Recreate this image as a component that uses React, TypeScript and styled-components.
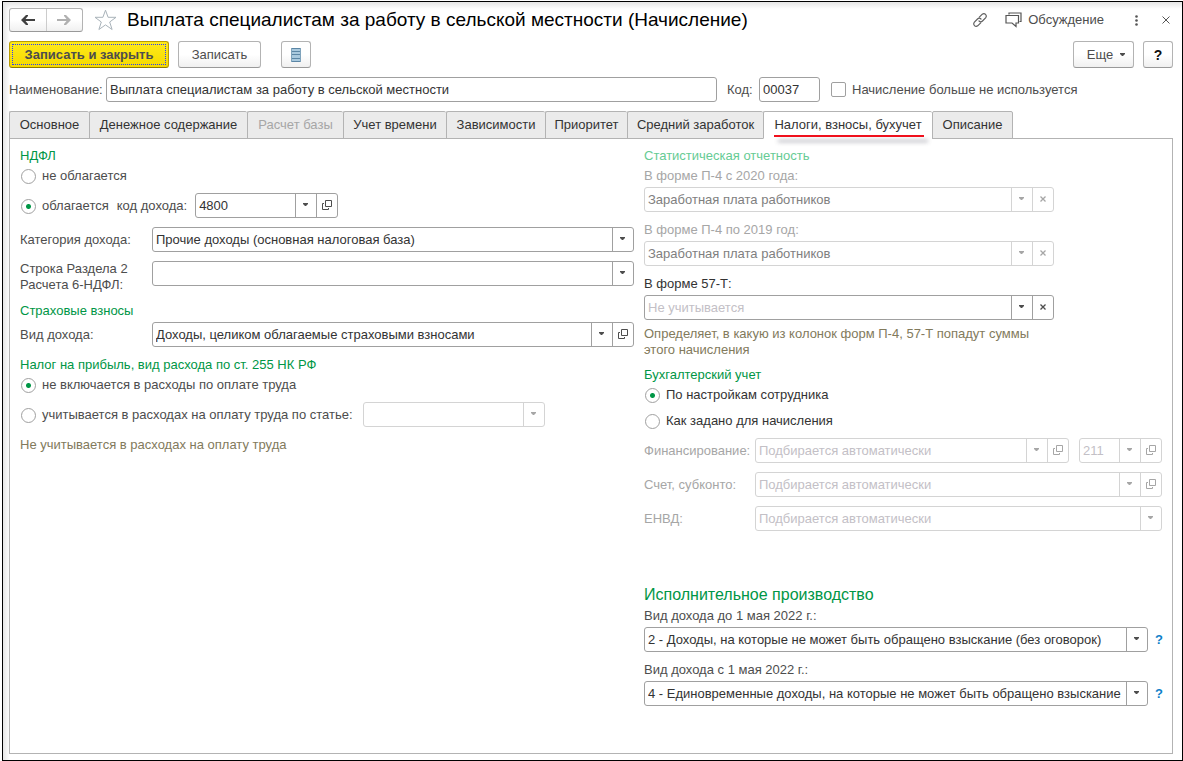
import React from "react";
import styled, { createGlobalStyle, css } from "styled-components";

const color = {
  text: "#4d4d4d",
  value: "#333333",
  green: "#009646",
  greenMuted: "#66cb94",
  note: "#827a5c",
  muted: "#a6a6a6",
  placeholder: "#c3c0c6",
  line: "#a0a0a0",
  lineMuted: "#d4d4d4",
  link: "#0f7fc9",
};

const GlobalStyle = createGlobalStyle`
  *, *::before, *::after { box-sizing: border-box; }
  body {
    margin: 0;
    background: #ffffff;
    color: ${color.text};
    font: 13px/16px "Liberation Sans", Arial, sans-serif;
  }
  button, input, select { font: inherit; color: inherit; margin: 0; }
`;

const Frame = styled.main`
  display: flex;
  flex-direction: column;
  min-height: calc(100vh - 1px);
  margin: 1px 0 0 2px;
  padding: 6px 9px 6px 6px;
  border: 1px solid #000000;
  background:
    linear-gradient(to right, #e6e6e6, rgba(255, 255, 255, 0)) left / 7px 100% no-repeat,
    linear-gradient(to bottom, #e6e6e6, rgba(255, 255, 255, 0)) top / 100% 7px no-repeat,
    #ffffff;
`;

const Header = styled.header`
  display: flex;
  align-items: center;
  height: 24px;
`;

const raised = css`
  border: 1px solid #b3b3b3;
  border-bottom-color: #999999;
  border-radius: 3px;
  background: linear-gradient(#ffffff 50%, #f0f0f0);
`;

const NavGroup = styled.div`
  ${raised}
  display: flex;
  width: 74px;
  height: 24px;
`;

const NavButton = styled.button`
  display: flex;
  flex: 1;
  align-items: center;
  justify-content: center;
  padding: 0;
  border: 0;
  background: none;
  & + & { border-left: 1px solid #cccccc; }
`;

const IconButton = styled.button`
  display: flex;
  align-items: center;
  justify-content: center;
  padding: 0;
  border: 0;
  background: none;
`;

const StarButton = styled(IconButton)`
  margin: 0 10px 0 11px;
`;

const Title = styled.h1`
  flex: 1;
  margin: 0;
  color: #000000;
  font-size: 19px;
  font-weight: 400;
  line-height: 24px;
  white-space: nowrap;
`;

const HeaderTools = styled.div`
  display: flex;
  align-items: center;
  padding-right: 3px;
`;

const Discussion = styled(IconButton)`
  gap: 6px;
  margin: 0 31px 0 17px;
`;

const CloseButton = styled(IconButton)`
  margin-left: 24px;
`;

const Toolbar = styled.div`
  display: flex;
  align-items: center;
  gap: 9px;
  margin-top: 9px;
`;

const Button = styled.button<{ $width: number }>`
  ${raised}
  display: flex;
  align-items: center;
  justify-content: center;
  width: ${(p) => p.$width}px;
  height: 27px;
  padding: 0;
`;

const PrimaryButton = styled(Button)`
  border-color: #b89b00;
  border-bottom-color: #8f7900;
  background: linear-gradient(#ffea1a, #f5d900);
  font-weight: 700;
  outline: 1px dotted #2a3cff;
  outline-offset: -4px;
`;

const ListButton = styled(Button)`
  margin: 0 auto 0 11px;
`;

const MoreButton = styled(Button)`
  gap: 7px;
  padding-left: 5px;
`;

const HelpButton = styled(Button)`
  color: #111111;
  font-size: 14px;
  font-weight: 700;
`;

const NameRow = styled.div`
  display: flex;
  align-items: center;
  margin-top: 9px;
`;

const TextInput = styled.input`
  height: 25px;
  padding: 0 3px;
  border: 1px solid ${color.line};
  border-radius: 3px;
  background: #ffffff;
  color: ${color.value};
`;

const NameLabel = styled.label`
  width: 97px;
`;

const NameInput = styled(TextInput)`
  flex: 0 1 611px;
  min-width: 0;
`;

const CodeLabel = styled.label`
  width: 32px;
  margin-left: 10px;
`;

const CodeInput = styled(TextInput)`
  width: 61px;
`;

const CheckLabel = styled.label`
  display: flex;
  align-items: center;
  gap: 6px;
  margin-left: 11px;
  white-space: nowrap;
`;

const Checkbox = styled.input`
  appearance: none;
  width: 15px;
  height: 15px;
  border: 1px solid ${color.line};
  border-radius: 2px;
  background: #ffffff;
`;

const Tabs = styled.div`
  display: flex;
  margin-top: 9px;
`;

const Tab = styled.button<{ $active?: boolean; $width: number }>`
  position: relative;
  flex: 0 0 auto;
  width: ${(p) => p.$width}px;
  height: 28px;
  margin-bottom: -1px;
  padding: 0;
  border: 1px solid #b3b3b3;
  border-right-width: 0;
  border-bottom-color: ${(p) => (p.$active ? "#ffffff" : "#b3b3b3")};
  border-radius: 2px 2px 0 0;
  background: ${(p) => (p.$active ? "#ffffff" : "#ebebeb")};
  color: ${color.value};
  white-space: nowrap;
  &:last-child { border-right-width: 1px; }
  &:disabled { color: ${color.muted}; }
`;

const ActiveMark = styled.span`
  position: absolute;
  right: 8px;
  bottom: 1px;
  left: 10px;
  height: 2px;
  background: #f0101c;
  box-shadow: 4px 5px 4px rgba(60, 60, 80, 0.45);
`;

const Panel = styled.section`
  display: grid;
  flex: 1;
  grid-template-columns: minmax(0, 614fr) minmax(0, 518fr);
  align-items: start;
  column-gap: 10px;
  padding: 8px 10px 46px;
  border: 1px solid #b3b3b3;
  background: #ffffff;
`;

const Column = styled.div`
  display: flex;
  flex-direction: column;
`;

const Group = styled.section<{ $top?: number }>`
  display: flex;
  flex-direction: column;
  gap: 9px;
  margin-top: ${(p) => p.$top ?? 0}px;
`;

const Heading = styled.h2<{ $muted?: boolean }>`
  margin: 0 0 -7px;
  color: ${(p) => (p.$muted ? color.greenMuted : color.green)};
  font-size: 13px;
  font-weight: 400;
  line-height: 18px;
`;

const LargeHeading = styled(Heading)`
  margin-bottom: -8px;
  font-size: 16px;
  line-height: 22px;
`;

const RadioLabel = styled.label<{ $strong?: boolean }>`
  display: flex;
  align-items: center;
  gap: 6px;
  height: 18px;
  padding-left: 1px;
  margin-bottom: -1px;
  line-height: 18px;
  white-space: nowrap;
  color: ${(p) => (p.$strong ? color.value : color.text)};
`;

const Radio = styled.input`
  appearance: none;
  width: 15px;
  height: 15px;
  border: 1px solid ${color.line};
  border-radius: 50%;
  background: #ffffff;
  &:checked {
    background: radial-gradient(circle, ${color.green} 0 2px, #ffffff 3px);
  }
`;

const InlineRow = styled.div<{ $gap: number }>`
  display: flex;
  align-items: center;
  gap: ${(p) => p.$gap}px;
`;

const InlineLabel = styled.label`
  white-space: nowrap;
`;

const FieldRow = styled.div<{ $label: number }>`
  display: grid;
  grid-template-rows: 25px;
  grid-template-columns: ${(p) => p.$label}px minmax(0, 1fr);
  align-items: center;
  height: 25px;
`;

const FieldLabel = styled.label<{ $tone?: "muted" | "strong"; $lines?: number }>`
  align-self: ${(p) => (p.$lines ? "start" : "auto")};
  color: ${(p) =>
    p.$tone === "muted" ? color.muted : p.$tone === "strong" ? color.value : color.text};
`;

const Stacked = styled.div<{ $max?: number }>`
  display: flex;
  flex-direction: column;
  gap: 2px;
  max-width: ${(p) => (p.$max ? `${p.$max}px` : "none")};
  line-height: 18px;
`;

const Note = styled.p`
  max-width: 410px;
  margin: 1px 0 -1px;
  color: ${color.note};
`;

const FieldNote = styled(Note)`
  margin-top: -3px;
`;

const SplitRow = styled.div`
  display: flex;
  gap: 10px;
`;

const HelpRow = styled.div`
  display: flex;
  align-items: center;
  gap: 7px;
`;

const HelpLink = styled.a`
  width: 7px;
  color: ${color.link};
  font-weight: 700;
  text-decoration: none;
`;

const ComboBox = styled.div<{ $width?: number; $muted?: boolean; $extra: boolean }>`
  display: grid;
  flex: ${(p) => (p.$width ? `0 0 ${p.$width}px` : "1 1 0")};
  grid-template-columns: minmax(0, 1fr) 21px ${(p) => (p.$extra ? "21px" : "")};
  min-width: 0;
  height: 25px;
  border: 1px solid ${(p) => (p.$muted ? color.lineMuted : color.line)};
  border-radius: 3px;
  background: #ffffff;
  color: ${(p) => (p.$muted ? color.muted : color.text)};
`;

const ComboSelect = styled.select<{ $tone: "value" | "muted" | "hint" }>`
  grid-area: 1 / 1 / 2 / 3;
  appearance: none;
  width: 100%;
  height: 23px;
  padding: 0 22px 0 3px;
  border: 0;
  border-radius: 2px;
  background: none;
  opacity: 1;
  color: ${(p) =>
    p.$tone === "hint" ? color.placeholder : p.$tone === "muted" ? "#808080" : color.value};
`;

const ComboArrow = styled.span`
  display: flex;
  grid-area: 1 / 2 / 2 / 3;
  align-items: center;
  justify-content: center;
  padding: 0 1px 2px 0;
  border-left: 1px solid ${color.line};
  pointer-events: none;
  ${ComboBox}:has(select:disabled) & { border-color: ${color.lineMuted}; }
`;

const ComboButton = styled.button`
  display: flex;
  grid-area: 1 / 3 / 2 / 4;
  align-items: center;
  justify-content: center;
  padding: 0 0 1px;
  border: 0;
  border-left: 1px solid ${color.line};
  background: none;
  &:disabled { border-color: ${color.lineMuted}; }
`;

const TriangleIcon = () => (
  <svg width="5" height="3" viewBox="0 0 5 3" fill="currentColor" aria-hidden="true">
    <path d="M0 0h5v1L3 3H2L0 1z" />
  </svg>
);

const OpenIcon = () => (
  <svg width="10" height="10" viewBox="0 0 10 10" fill="none" stroke="currentColor" aria-hidden="true">
    <path d="M3.500 .5h6v6h-6zM2 3.500H.5v6h6V8" />
  </svg>
);

const ClearIcon = () => (
  <svg width="6" height="6" viewBox="0 0 6 6" stroke="currentColor" strokeWidth="1.3" aria-hidden="true">
    <path d="M.5 .5l5 5M5.5 .5l-5 5" />
  </svg>
);

const ArrowIcon = ({ back, tone }: { back?: boolean; tone: string }) => (
  <svg width="14" height="10" viewBox="0 0 14 10" fill={tone} aria-hidden="true">
    <path
      d={
        back
          ? "M0 5L5 0h2v1L4.500 4H14v2H4.500L7 9v1H5z"
          : "M14 5L9 0H7v1l2.500 3H0v2h9.500L7 9v1h2z"
      }
    />
  </svg>
);

const StarIcon = () => (
  <svg width="23" height="22" viewBox="0 0 23 22" fill="none" stroke="#a9b3ba" aria-hidden="true">
    <path d="M11.500 1.200l2.600 7.100h7.900l-6.300 4.700 2.400 7.500-6.600-4.600-6.600 4.600L7.300 13 1 8.300h7.900z" />
  </svg>
);

const LinkIcon = () => (
  <svg width="16" height="16" viewBox="0 0 16 16" fill="none" stroke="#606060" strokeWidth="1.200" strokeLinecap="round" aria-hidden="true">
    <path d="M7.300 5.200l3-3a2.500 2.500 0 0 1 3.500 3.500l-3.300 3.300a2.500 2.500 0 0 1-3.500 0" />
    <path d="M8.700 10.800l-3 3a2.500 2.500 0 0 1-3.500-3.500l3.300-3.300a2.500 2.500 0 0 1 3.500 0" />
  </svg>
);

const ChatIcon = () => (
  <svg width="17" height="16" viewBox="0 0 17 16" fill="none" stroke="#555555" strokeWidth="1.200" aria-hidden="true">
    <path d="M4 2.500V1h12v8.500h-1.500" />
    <path d="M1 3.500h12.500v7.500h-2.500v3.500L7 11H1z" />
  </svg>
);

const DotsIcon = () => (
  <svg width="3" height="11" viewBox="0 0 3 11" fill="#555555" aria-hidden="true">
    <circle cx="1.500" cy="1.500" r="1.300" />
    <circle cx="1.500" cy="5.500" r="1.300" />
    <circle cx="1.500" cy="9.500" r="1.300" />
  </svg>
);

const CloseIcon = () => (
  <svg width="8" height="8" viewBox="0 0 8 8" stroke="#555555" aria-hidden="true">
    <path d="M.5 .5l7 7M7.500 .5l-7 7" />
  </svg>
);

const ListIcon = () => (
  <svg width="10" height="14" viewBox="0 0 10 14" aria-hidden="true">
    <path fill="#a9c9de" d="M0 0h10v14H0z" />
    <path stroke="#5b86a5" d="M0 .5h10M0 3.500h10M0 6.500h10M0 10.500h10M0 13.500h10" />
    <path stroke="#7fa3bc" fill="none" d="M.5 0v14M9.500 0v14" />
  </svg>
);

type ComboProps = {
  id: string;
  value?: string;
  hint?: string;
  width?: number;
  disabled?: boolean;
  extra?: "open" | "clear";
  label?: string;
};

const Combo = ({ id, value, hint, width, disabled, extra, label }: ComboProps) => (
  <ComboBox $width={width} $muted={disabled} $extra={Boolean(extra)}>
    <ComboSelect
      id={id}
      disabled={disabled}
      aria-label={label}
      $tone={hint ? "hint" : disabled ? "muted" : "value"}
    >
      <option>{value ?? hint ?? ""}</option>
    </ComboSelect>
    <ComboArrow>
      <TriangleIcon />
    </ComboArrow>
    {extra && (
      <ComboButton type="button" disabled={disabled} aria-label={extra === "open" ? "Открыть" : "Очистить"}>
        {extra === "open" ? <OpenIcon /> : <ClearIcon />}
      </ComboButton>
    )}
  </ComboBox>
);

const tabs = [
  { title: "Основное", width: 80 },
  { title: "Денежное содержание", width: 158 },
  { title: "Расчет базы", width: 96, disabled: true },
  { title: "Учет времени", width: 103 },
  { title: "Зависимости", width: 99 },
  { title: "Приоритет", width: 82 },
  { title: "Средний заработок", width: 136 },
  { title: "Налоги, взносы, бухучет", width: 169, active: true },
  { title: "Описание", width: 81 },
];

export default function App() {
  return (
    <>
      <GlobalStyle />
      <Frame>
        <Header>
          <NavGroup>
            <NavButton type="button" aria-label="Назад">
              <ArrowIcon back tone="#404040" />
            </NavButton>
            <NavButton type="button" aria-label="Вперед">
              <ArrowIcon tone="#b0b0b0" />
            </NavButton>
          </NavGroup>
          <StarButton type="button" aria-label="В избранное">
            <StarIcon />
          </StarButton>
          <Title>Выплата специалистам за работу в сельской местности (Начисление)</Title>
          <HeaderTools>
            <IconButton type="button" aria-label="Ссылка">
              <LinkIcon />
            </IconButton>
            <Discussion type="button">
              <ChatIcon />
              Обсуждение
            </Discussion>
            <IconButton type="button" aria-label="Действия">
              <DotsIcon />
            </IconButton>
            <CloseButton type="button" aria-label="Закрыть">
              <CloseIcon />
            </CloseButton>
          </HeaderTools>
        </Header>

        <Toolbar>
          <PrimaryButton type="button" $width={160}>Записать и закрыть</PrimaryButton>
          <Button type="button" $width={83}>Записать</Button>
          <ListButton type="button" $width={30} aria-label="Список">
            <ListIcon />
          </ListButton>
          <MoreButton type="button" $width={61}>
            Еще
            <TriangleIcon />
          </MoreButton>
          <HelpButton type="button" $width={30}>?</HelpButton>
        </Toolbar>

        <NameRow>
          <NameLabel htmlFor="name">Наименование:</NameLabel>
          <NameInput id="name" defaultValue="Выплата специалистам за работу в сельской местности" />
          <CodeLabel htmlFor="code">Код:</CodeLabel>
          <CodeInput id="code" defaultValue="00037" />
          <CheckLabel>
            <Checkbox type="checkbox" />
            Начисление больше не используется
          </CheckLabel>
        </NameRow>

        <Tabs role="tablist">
          {tabs.map((tab) => (
            <Tab
              key={tab.title}
              type="button"
              role="tab"
              aria-selected={Boolean(tab.active)}
              disabled={tab.disabled}
              $active={tab.active}
              $width={tab.width}
            >
              {tab.title}
              {tab.active && <ActiveMark />}
            </Tab>
          ))}
        </Tabs>

        <Panel>
          <Column>
            <Group>
              <Heading>НДФЛ</Heading>
              <RadioLabel>
                <Radio type="radio" name="ndfl" />
                не облагается
              </RadioLabel>
              <InlineRow $gap={8}>
                <RadioLabel>
                  <Radio type="radio" name="ndfl" defaultChecked />
                  облагается
                </RadioLabel>
                <InlineLabel htmlFor="income-code">код дохода:</InlineLabel>
                <Combo id="income-code" value="4800" width={143} extra="open" />
              </InlineRow>
              <FieldRow $label={132}>
                <FieldLabel htmlFor="category">Категория дохода:</FieldLabel>
                <Combo id="category" value="Прочие доходы (основная налоговая база)" />
              </FieldRow>
              <FieldRow $label={132}>
                <FieldLabel htmlFor="section-line" $lines={2}>
                  Строка Раздела 2<br />
                  Расчета 6-НДФЛ:
                </FieldLabel>
                <Combo id="section-line" />
              </FieldRow>
            </Group>

            <Group $top={16}>
              <Heading>Страховые взносы</Heading>
              <FieldRow $label={132}>
                <FieldLabel htmlFor="income-kind">Вид дохода:</FieldLabel>
                <Combo id="income-kind" value="Доходы, целиком облагаемые страховыми взносами" extra="open" />
              </FieldRow>
            </Group>

            <Group $top={9}>
              <Heading>Налог на прибыль, вид расхода по ст. 255 НК РФ</Heading>
              <RadioLabel>
                <Radio type="radio" name="profit" defaultChecked />
                не включается в расходы по оплате труда
              </RadioLabel>
              <InlineRow $gap={10}>
                <RadioLabel>
                  <Radio type="radio" name="profit" />
                  учитывается в расходах на оплату труда по статье:
                </RadioLabel>
                <Combo id="expense-item" width={182} disabled label="Статья расходов" />
              </InlineRow>
              <Note>Не учитывается в расходах на оплату труда</Note>
            </Group>
          </Column>

          <Column>
            <Group>
              <Heading $muted>Статистическая отчетность</Heading>
              <Stacked $max={410}>
                <FieldLabel $tone="muted" htmlFor="p4-2020">В форме П-4 с 2020 года:</FieldLabel>
                <SplitRow>
                  <Combo id="p4-2020" value="Заработная плата работников" disabled extra="clear" />
                </SplitRow>
              </Stacked>
              <Stacked $max={410}>
                <FieldLabel $tone="muted" htmlFor="p4-2019">В форме П-4 по 2019 год:</FieldLabel>
                <SplitRow>
                  <Combo id="p4-2019" value="Заработная плата работников" disabled extra="clear" />
                </SplitRow>
              </Stacked>
              <Stacked $max={410}>
                <FieldLabel $tone="strong" htmlFor="form-57">В форме 57-Т:</FieldLabel>
                <SplitRow>
                  <Combo id="form-57" hint="Не учитывается" extra="clear" />
                </SplitRow>
              </Stacked>
              <FieldNote>
                Определяет, в какую из колонок форм П-4, 57-Т попадут суммы этого начисления
              </FieldNote>
            </Group>

            <Group $top={9}>
              <Heading>Бухгалтерский учет</Heading>
              <RadioLabel $strong>
                <Radio type="radio" name="accounting" defaultChecked />
                По настройкам сотрудника
              </RadioLabel>
              <RadioLabel $strong>
                <Radio type="radio" name="accounting" />
                Как задано для начисления
              </RadioLabel>
              <FieldRow $label={111}>
                <FieldLabel $tone="muted" htmlFor="financing">Финансирование:</FieldLabel>
                <SplitRow>
                  <Combo id="financing" hint="Подбирается автоматически" disabled extra="open" />
                  <Combo id="financing-code" hint="211" width={83} disabled extra="open" label="Код финансирования" />
                </SplitRow>
              </FieldRow>
              <FieldRow $label={111}>
                <FieldLabel $tone="muted" htmlFor="account">Счет, субконто:</FieldLabel>
                <Combo id="account" hint="Подбирается автоматически" disabled extra="open" />
              </FieldRow>
              <FieldRow $label={111}>
                <FieldLabel $tone="muted" htmlFor="envd">ЕНВД:</FieldLabel>
                <Combo id="envd" hint="Подбирается автоматически" disabled />
              </FieldRow>
            </Group>

            <Group $top={53}>
              <LargeHeading>Исполнительное производство</LargeHeading>
              <Stacked>
                <FieldLabel htmlFor="before-may">Вид дохода до 1 мая 2022 г.:</FieldLabel>
                <HelpRow>
                  <Combo
                    id="before-may"
                    value="2 - Доходы, на которые не может быть обращено взыскание (без оговорок)"
                  />
                  <HelpLink href="#before-may">?</HelpLink>
                </HelpRow>
              </Stacked>
              <Stacked>
                <FieldLabel htmlFor="after-may">Вид дохода с 1 мая 2022 г.:</FieldLabel>
                <HelpRow>
                  <Combo
                    id="after-may"
                    value="4 - Единовременные доходы, на которые не может быть обращено взыскание"
                  />
                  <HelpLink href="#after-may">?</HelpLink>
                </HelpRow>
              </Stacked>
            </Group>
          </Column>
        </Panel>
      </Frame>
    </>
  );
}
